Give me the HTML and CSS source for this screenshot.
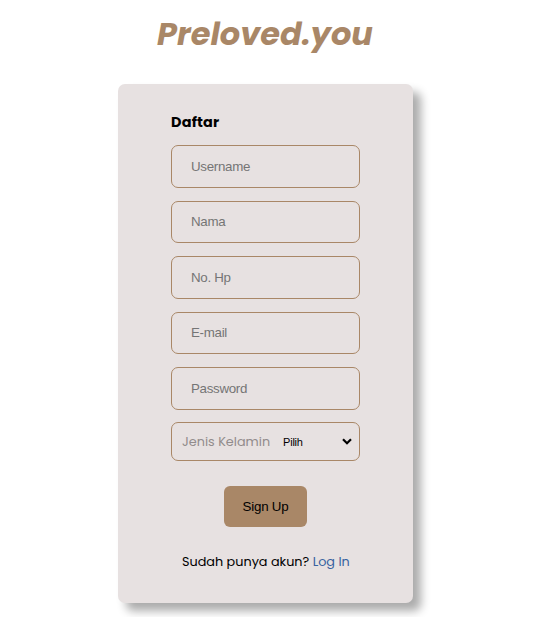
FILE: index.html
```html
<!DOCTYPE html>
<html lang="id">
<head>
<meta charset="utf-8">
<title>Preloved.you</title>
<link rel="stylesheet" href="styles.css">
</head>
<body>
<h1 class="brand">Preloved.you</h1>
<form class="card">
  <h2 class="heading">Daftar</h2>
  <div class="fields">
    <input class="field" type="text" placeholder="Username">
    <input class="field" type="text" placeholder="Nama">
    <input class="field" type="text" placeholder="No. Hp">
    <input class="field" type="text" placeholder="E-mail">
    <input class="field" type="password" placeholder="Password">
  </div>
  <div class="gender">
    <label class="gender-label" for="gender">Jenis Kelamin</label>
    <select class="gender-select" id="gender"><option>Pilih</option></select>
    <svg class="chevron" viewBox="0 0 10 7"><path d="M1 1.2 5 5.2 9 1.2" fill="none" stroke="#000" stroke-width="2.2"/></svg>
  </div>
  <button class="submit" type="button">Sign Up</button>
  <p class="login">Sudah punya akun? <a class="login-link" href="#">Log In</a></p>
</form>
</body>
</html>
```
FILE: styles.css
```css
* {
  box-sizing: border-box;
}

body {
  margin: 0;
  height: 617px;
  overflow: hidden;
  background: #fff;
  font-family: Poppins, Inter, sans-serif;
}

.brand {
  margin: 0;
  padding: 10px 0 0 157px;
  height: 84px;
  color: #a98767;
  font-size: 32px;
  font-weight: 700;
  font-style: italic;
  line-height: 48px;
  white-space: nowrap;
}

.card {
  display: flex;
  flex-direction: column;
  width: 295px;
  height: 519px;
  margin-left: 118px;
  padding: 26px 53px 0;
  border-radius: 7px;
  background: #e7e1e1;
  box-shadow: 8px 8px 10px rgba(0, 0, 0, 0.33);
}

.heading {
  margin: 0 0 11px;
  font-size: 14.4px;
  font-weight: 700;
  line-height: 24px;
  letter-spacing: 0.2px;
}

.fields {
  display: flex;
  flex-direction: column;
  gap: 13px;
}

.field {
  width: 189px;
  height: 42.5px;
  padding: 0 19px;
  border: 1px solid #a98767;
  border-radius: 7px;
  outline: 0;
  background: transparent;
  font: 13.33px "Liberation Sans", sans-serif;
  letter-spacing: -0.3px;
}

.field::placeholder {
  color: #757575;
}

.gender {
  display: flex;
  align-items: center;
  width: 189px;
  height: 39px;
  margin-top: 12.5px;
  padding: 0 7px 0 10px;
  border: 1px solid #a98767;
  border-radius: 7px;
}

.gender-label {
  width: 101px;
  color: #928c8c;
  font-size: 12.8px;
  white-space: nowrap;
}

.gender-select {
  flex: 1;
  min-width: 0;
  padding: 0;
  border: 0;
  appearance: none;
  background: transparent;
  color: #000;
  font: 11px "Liberation Sans", sans-serif;
  letter-spacing: -0.2px;
}

.chevron {
  width: 10px;
  height: 7px;
}

.submit {
  align-self: center;
  width: 83px;
  height: 41px;
  margin-top: 25px;
  padding: 0;
  border: 0;
  border-radius: 6px;
  background: #a98767;
  color: #000;
  font: 13.33px "Liberation Sans", sans-serif;
  letter-spacing: -0.2px;
}

.login {
  margin: 25px 0 0 11px;
  font-size: 12.8px;
  line-height: 20px;
  white-space: nowrap;
}

.login-link {
  color: #3863a0;
  text-decoration: none;
}
```
